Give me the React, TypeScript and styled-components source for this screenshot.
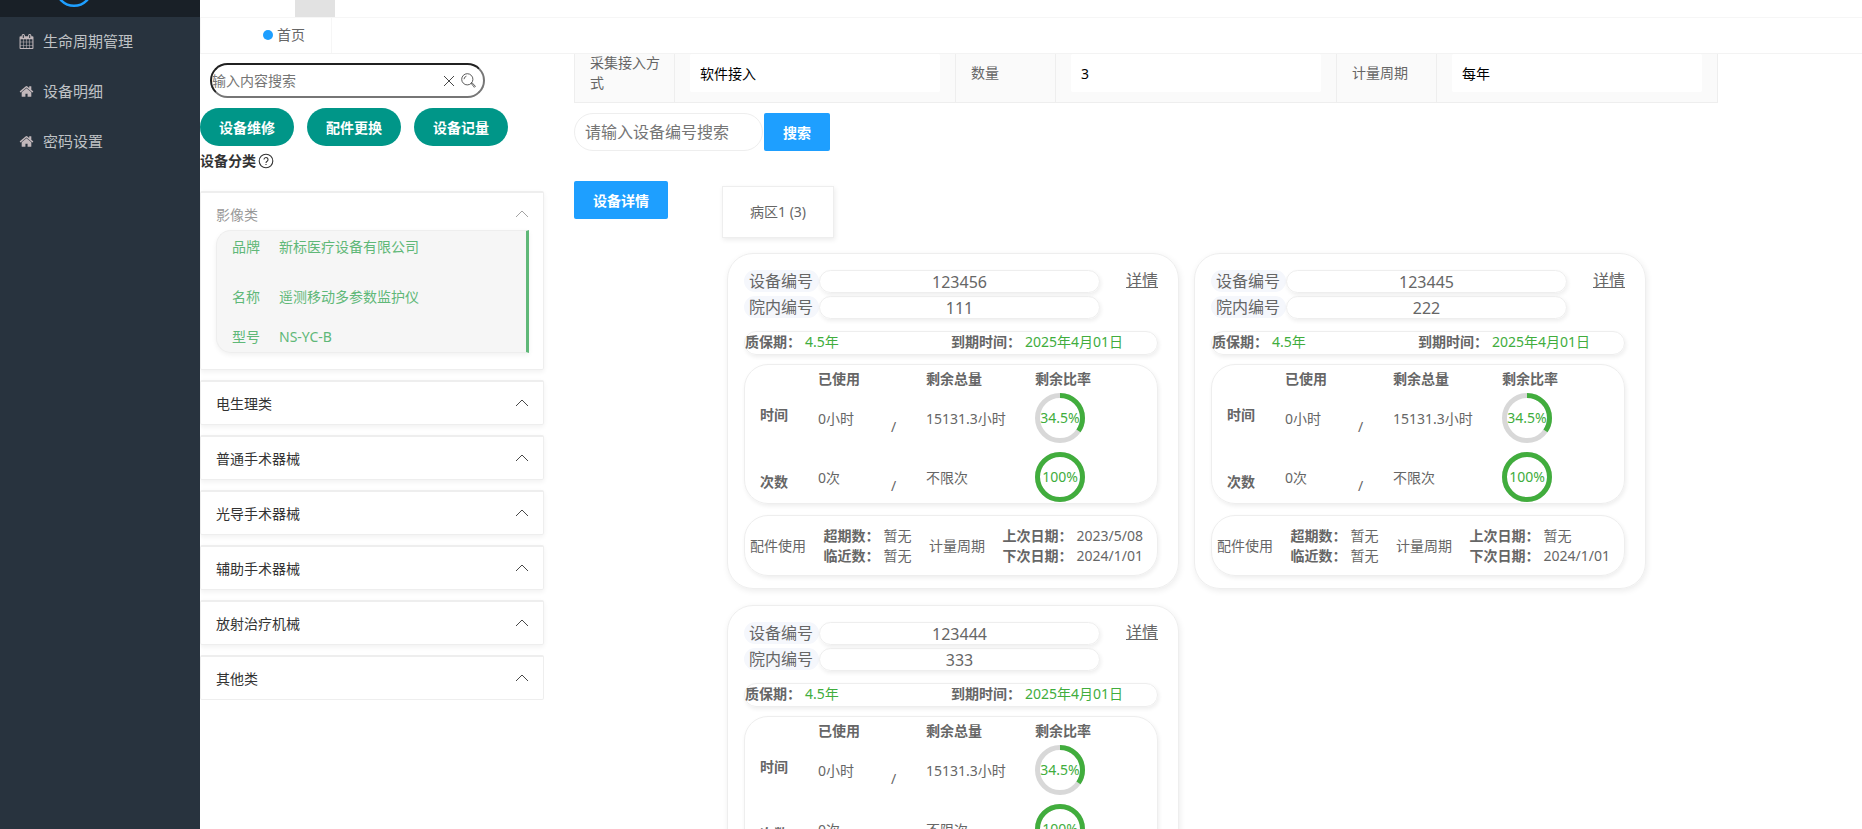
import React from "react";
import styled, { createGlobalStyle } from "styled-components";

const GlobalStyle = createGlobalStyle`
  *, *::before, *::after { box-sizing: border-box; }
  body {
    margin: 0;
    background: #fff;
    color: #666;
    font: 14px/20px "Noto Sans", "Noto Sans CJK SC", sans-serif;
  }
  button, input { font-family: inherit; }
`;

/* ---------- shell ---------- */

const Shell = styled.div`
  display: flex;
  height: 100vh;
  overflow: hidden;
`;

const Sidebar = styled.aside`
  flex: 0 0 200px;
  background: #28333e;
`;

const LogoBar = styled.div`
  display: flex;
  align-items: flex-end;
  height: 17px;
  padding: 0 0 10px 55px;
  overflow: hidden;
  background: #192027;

  svg { flex: none; display: block; }
`;

const NavLink = styled.a`
  display: flex;
  align-items: center;
  gap: 9px;
  height: 50px;
  padding: 0 0 2px 19px;
  color: #bfc2c5;
  font-size: 15px;
  text-decoration: none;

  svg { flex: none; fill: #c2b8bb; }
`;

const Page = styled.div`
  display: flex;
  flex: 1;
  flex-direction: column;
  min-width: 0;
`;

const TopBar = styled.header`
  flex: none;
  height: 18px;
  padding-left: 95px;
  border-bottom: 1px solid #f6f6f6;
`;

const TopBarItem = styled.div`
  width: 40px;
  height: 17px;
  background: #e2e2e2;
`;

const TabBar = styled.nav`
  flex: none;
  display: flex;
  height: 36px;
  border-bottom: 1px solid #f3f3f3;
`;

const PageTab = styled.a`
  display: flex;
  align-items: center;
  gap: 4px;
  width: 132px;
  padding: 0 0 2px 62px;
  border: solid #f6f6f6;
  border-width: 0 1px;
  color: #666;
  text-decoration: none;

  &::before {
    content: "";
    width: 10px;
    height: 10px;
    border-radius: 50%;
    background: #1e9fff;
  }
`;

const Body = styled.div`
  display: flex;
  flex: 1;
  gap: 30px;
  min-height: 0;
  overflow: auto;
  scrollbar-width: none;
`;

/* ---------- left column ---------- */

const Categories = styled.section`
  flex: 0 0 344px;
`;

const SearchBox = styled.form`
  display: flex;
  align-items: center;
  gap: 6px;
  width: 275px;
  height: 35px;
  margin: 9px 0 10px 10px;
  padding-right: 7px;
  border: 2px inset #767676;
  border-radius: 18px;
  overflow: hidden;
`;

const SearchInput = styled.input`
  flex: 1;
  min-width: 0;
  padding: 0;
  border: 0;
  outline: 0;
  background: none;
  font-size: 14px;

  &::placeholder { color: #757575; }
`;

const IconButton = styled.button`
  display: flex;
  padding: 0;
  border: 0;
  background: none;
  color: #333;
`;

const Button = styled.button<{ $round?: boolean }>`
  height: 38px;
  padding: 0 19px;
  border: 0;
  border-radius: ${(p) => (p.$round ? "19px" : "2px")};
  background: ${(p) => (p.$round ? "#009688" : "#1e9fff")};
  color: #fff;
  font-size: 14px;
  font-weight: 700;
  white-space: nowrap;
`;

const Actions = styled.div`
  display: flex;
  gap: 13px;
`;

const GroupTitle = styled.h2`
  display: flex;
  align-items: center;
  gap: 2px;
  height: 20px;
  margin: 5px 0 20px;
  color: #333;
  font-size: 14px;
`;

const Panel = styled.section`
  margin-bottom: 10px;
  border: 1px solid #eee;
  border-top-width: 2px;
  border-radius: 2px;
  box-shadow: 0 2px 5px rgba(0, 0, 0, 0.06);

  &:last-child { box-shadow: none; }
`;

const PanelHeader = styled.button<{ $muted?: boolean }>`
  display: flex;
  align-items: center;
  justify-content: space-between;
  width: 100%;
  height: 42px;
  padding: 0 14px 1px 15px;
  border: 0;
  background: none;
  color: ${(p) => (p.$muted ? "#999" : "#333")};
  font-size: 14px;
`;

const DeviceInfo = styled.dl`
  display: grid;
  grid-template-columns: 47px 1fr;
  grid-template-rows: 50px 50px 22px;
  height: 123px;
  margin: -5px 14px 16px 15px;
  padding-left: 15px;
  border: 1px solid #eee;
  border-right: 3px solid #5fb878;
  border-radius: 15px 0 0 15px;
  background: #f6f6f6;
  box-shadow: 0 2px 5px rgba(0, 0, 0, 0.06);
  color: #5fb878;
  line-height: 32px;

  dt, dd { margin: 0; }
  dt:nth-of-type(3), dd:nth-of-type(3) { line-height: 12px; }
`;

/* ---------- right column ---------- */

const Main = styled.main`
  flex: 1;
  min-width: 0;
  padding-right: 144px;
`;

const InfoTable = styled.table`
  width: 100%;
  height: 59px;
  margin-top: -11px;
  border-collapse: collapse;
  table-layout: fixed;
  background: #fafafa;

  th, td {
    padding: 9px 15px;
    border: 1px solid #eee;
  }
  th {
    width: 100px;
    padding-right: 10px;
    font-weight: 400;
    text-align: left;
  }
`;

const ReadField = styled.input`
  display: block;
  width: 100%;
  height: 38px;
  padding: 0 0 0 10px;
  border: 0;
  border-radius: 2px;
  background: #fff;
  color: #000;
  font-size: 14px;
`;

const DeviceSearch = styled.form`
  display: flex;
  gap: 1px;
  margin: 10px 0 30px;
`;

const DeviceInput = styled.input`
  width: 189px;
  height: 38px;
  padding: 0 0 0 10px;
  border: 1px solid #eee;
  border-radius: 19px;
  font-size: 16px;

  &::placeholder { color: #757575; }
`;

const DetailArea = styled.div`
  display: flex;
  align-items: flex-start;
  gap: 54px;
`;

const Wards = styled.div`
  flex: 1;
  min-width: 0;
  padding-top: 5px;
`;

const WardTab = styled.button`
  height: 52px;
  padding: 0 27px 2px;
  border: 1px solid #eee;
  background: #fff;
  box-shadow: 1px 2px 5px rgba(0, 0, 0, 0.08);
  color: #666;
  font-size: 14px;
`;

const CardGrid = styled.div`
  display: flex;
  flex-wrap: wrap;
  gap: 16px 15px;
  margin: 15px 0 0 5px;
`;

const Card = styled.article`
  width: 452px;
  height: 336px;
  padding: 16px 20px 12px 16px;
  border: 1px solid #eee;
  border-radius: 26px;
  box-shadow: 1px 2px 6px rgba(0, 0, 0, 0.08);
`;

const CardHead = styled.div`
  display: flex;
  align-items: flex-start;
  justify-content: space-between;
  font-size: 16px;
`;

const Numbers = styled.dl`
  display: grid;
  grid-template-columns: 75px 281px;
  row-gap: 3px;
  margin: 0;
  line-height: 22px;
  white-space: nowrap;

  dt {
    height: 22px;
    padding: 0 5px;
    border-radius: 11px;
    background: #f5f7fc;
  }
`;

const framed = `
  border: 1px solid #eee;
  box-shadow: 1px 2px 4px rgba(0, 0, 0, 0.07);
`;

const NumberValue = styled.dd`
  ${framed}
  height: 23px;
  margin: 0;
  border-radius: 12px;
  text-align: center;
`;

const DetailLink = styled.a`
  color: #666;
  line-height: 20px;
`;

const Warranty = styled.div`
  ${framed}
  display: grid;
  grid-template-columns: 1fr 1fr;
  height: 24px;
  margin: 12px 0 9px;
  border-radius: 12px;
  white-space: nowrap;

  strong { margin-right: 4px; }
  span { color: #41ad3d; }
`;

const UsageBox = styled.div`
  ${framed}
  height: 140px;
  padding-left: 15px;
  border-radius: 24px;
`;

const UsageTable = styled.table`
  width: 100%;
  border-spacing: 0;
  table-layout: fixed;

  th, td {
    padding: 0;
    text-align: left;
    white-space: nowrap;
  }
  thead tr { height: 28px; }
  tbody tr { height: 59px; }
  tbody tr:first-child td { padding-bottom: 7px; }
  tbody tr:first-child th { padding-bottom: 15px; }
  tbody tr:last-child td { padding-bottom: 7px; }
  tbody td.ring { padding: 0; vertical-align: top; }
  tbody tr td.slash { padding-top: 9px; padding-bottom: 0; }
`;

const Service = styled.div`
  ${framed}
  display: flex;
  align-items: center;
  justify-content: space-between;
  height: 61px;
  margin-top: 11px;
  padding: 0 14px 0 5px;
  border-radius: 24px;
  white-space: nowrap;

  strong { margin-right: 4px; }
`;

/* ---------- drawings ---------- */

const HomeIcon = () => (
  <svg width="15" height="15" viewBox="0 0 1792 1792" aria-hidden="true">
    <path d="M1472 992v480q0 26-19 45t-45 19h-384v-384h-256v384h-384q-26 0-45-19t-19-45v-480q0-1 .5-3t.5-3l575-474 575 474q1 2 1 6zm223-69l-62 74q-8 9-21 11h-3q-13 0-21-7l-692-577-692 577q-12 8-24 7-13-2-21-11l-62-74q-8-10-7-23.5t11-21.5l719-599q32-26 76-26t76 26l244 204v-195q0-14 9-23t23-9h192q14 0 23 9t9 23v408l219 182q10 8 11 21.5t-7 23.5z" />
  </svg>
);

const CalendarIcon = () => (
  <svg width="15" height="15" viewBox="0 0 1792 1792" aria-hidden="true">
    <path d="M192 1664h288v-288h-288v288zm352 0h320v-288h-320v288zm-352-352h288v-320h-288v320zm352 0h320v-320h-320v320zm-352-384h288v-288h-288v288zm736 736h320v-288h-320v288zm-384-736h320v-288h-320v288zm768 736h288v-288h-288v288zm-384-352h320v-320h-320v320zm-352-864v-288q0-13-9.5-22.5t-22.5-9.5h-64q-13 0-22.5 9.5t-9.5 22.5v288q0 13 9.5 22.5t22.5 9.5h64q13 0 22.5-9.5t9.5-22.5zm736 864h288v-320h-288v320zm-384-384h320v-288h-320v288zm384 0h288v-288h-288v288zm32-480v-288q0-13-9.5-22.5t-22.5-9.5h-64q-13 0-22.5 9.5t-9.5 22.5v288q0 13 9.5 22.5t22.5 9.5h64q13 0 22.5-9.5t9.5-22.5zm384-64v1280q0 52-38 90t-90 38h-1408q-52 0-90-38t-38-90v-1280q0-52 38-90t90-38h128v-96q0-66 47-113t113-47h64q66 0 113 47t47 113v96h384v-96q0-66 47-113t113-47h64q66 0 113 47t47 113v96h128q52 0 90 38t38 90z" />
  </svg>
);

const LogoRing = () => (
  <svg width="38" height="38" viewBox="0 0 38 38" aria-hidden="true">
    <circle cx="19" cy="19" r="17.8" fill="none" stroke="#1e9fff" strokeWidth="2.4" />
  </svg>
);

const ClearIcon = () => (
  <svg width="12" height="12" viewBox="0 0 12 12" fill="none" stroke="currentColor" strokeWidth="0.9" aria-hidden="true">
    <path d="M1 1l10 10M11 1L1 11" />
  </svg>
);

const SearchIcon = () => (
  <svg width="15" height="16" viewBox="0 0 15 16" fill="none" stroke="currentColor" strokeWidth="0.8" aria-hidden="true">
    <circle cx="6.3" cy="6.3" r="5.6" />
    <path d="M3 6.200a3.400 3.400 0 0 1 2.400-3M10.200 10.400l.8-.7 3.400 3.600-1 1z" />
  </svg>
);

const HelpIcon = () => (
  <svg width="16" height="16" viewBox="0 0 16 16" fill="none" stroke="#333" strokeWidth="1.1" aria-hidden="true">
    <circle cx="8" cy="8" r="6.8" />
    <path d="M6 6.600a2 2 0 1 1 3.100 1.600C8.300 8.700 8 9 8 9.900M8 10.900v1.200" />
  </svg>
);

const Chevron = () => (
  <svg width="14" height="8" viewBox="0 0 14 8" fill="none" stroke="currentColor" strokeWidth="0.9" aria-hidden="true">
    <path d="M1 7l6-6 6 6" />
  </svg>
);

const RING_LENGTH = 2 * Math.PI * 22.5;

const Ring = ({ percent }: { percent: number }) => (
  <svg width="50" height="50" viewBox="0 0 50 50" display="block" role="img">
    <circle cx="25" cy="25" r="22.5" fill="none" stroke="#d8d8d8" strokeWidth="5" />
    <circle
      cx="25"
      cy="25"
      r="22.5"
      fill="none"
      stroke="#41ad3d"
      strokeWidth="5"
      strokeDasharray={`${(RING_LENGTH * percent) / 100} ${RING_LENGTH}`}
      transform="rotate(-90 25 25)"
    />
    <text x="25" y="30" textAnchor="middle" fontSize="14" fill="#41ad3d">
      {percent}%
    </text>
  </svg>
);

/* ---------- data ---------- */

const nav = [
  { label: "生命周期管理", Icon: CalendarIcon },
  { label: "设备明细", Icon: HomeIcon },
  { label: "密码设置", Icon: HomeIcon },
];

const categories = ["电生理类", "普通手术器械", "光导手术器械", "辅助手术器械", "放射治疗机械", "其他类"];

interface Device {
  id: string;
  ward: string;
  last: string;
  next: string;
}

const devices: Device[] = [
  { id: "123456", ward: "111", last: "2023/5/08", next: "2024/1/01" },
  { id: "123445", ward: "222", last: "暂无", next: "2024/1/01" },
  { id: "123444", ward: "333", last: "暂无", next: "2024/1/01" },
];

const DeviceCard = ({ device }: { device: Device }) => (
  <Card>
    <CardHead>
      <Numbers>
        <dt>设备编号</dt>
        <NumberValue>{device.id}</NumberValue>
        <dt>院内编号</dt>
        <NumberValue>{device.ward}</NumberValue>
      </Numbers>
      <DetailLink href="#detail">详情</DetailLink>
    </CardHead>
    <Warranty>
      <div><strong>质保期：</strong><span>4.5年</span></div>
      <div><strong>到期时间：</strong><span>2025年4月01日</span></div>
    </Warranty>
    <UsageBox>
      <UsageTable>
        <colgroup>
          <col style={{ width: 58 }} />
          <col style={{ width: 73 }} />
          <col style={{ width: 35 }} />
          <col style={{ width: 109 }} />
          <col />
        </colgroup>
        <thead>
          <tr>
            <td />
            <th>已使用</th>
            <td />
            <th>剩余总量</th>
            <th>剩余比率</th>
          </tr>
        </thead>
        <tbody>
          <tr>
            <th>时间</th>
            <td>0小时</td>
            <td className="slash">/</td>
            <td>15131.3小时</td>
            <td className="ring"><Ring percent={34.5} /></td>
          </tr>
          <tr>
            <th>次数</th>
            <td>0次</td>
            <td className="slash">/</td>
            <td>不限次</td>
            <td className="ring"><Ring percent={100} /></td>
          </tr>
        </tbody>
      </UsageTable>
    </UsageBox>
    <Service>
      <span>配件使用</span>
      <div>
        <div><strong>超期数：</strong>暂无</div>
        <div><strong>临近数：</strong>暂无</div>
      </div>
      <span>计量周期</span>
      <div>
        <div><strong>上次日期：</strong>{device.last}</div>
        <div><strong>下次日期：</strong>{device.next}</div>
      </div>
    </Service>
  </Card>
);

export default function App() {
  return (
    <>
      <GlobalStyle />
      <Shell>
        <Sidebar>
          <LogoBar><LogoRing /></LogoBar>
          {nav.map(({ label, Icon }) => (
            <NavLink href="#nav" key={label}><Icon />{label}</NavLink>
          ))}
        </Sidebar>
        <Page>
          <TopBar><TopBarItem /></TopBar>
          <TabBar><PageTab href="#home">首页</PageTab></TabBar>
          <Body>
            <Categories>
              <SearchBox>
                <SearchInput placeholder="输入内容搜索" aria-label="输入内容搜索" />
                <IconButton type="button" aria-label="清除"><ClearIcon /></IconButton>
                <IconButton type="button" aria-label="搜索"><SearchIcon /></IconButton>
              </SearchBox>
              <Actions>
                <Button $round>设备维修</Button>
                <Button $round>配件更换</Button>
                <Button $round>设备记量</Button>
              </Actions>
              <GroupTitle>设备分类<HelpIcon /></GroupTitle>
              <div>
                <Panel>
                  <PanelHeader $muted>影像类<Chevron /></PanelHeader>
                  <DeviceInfo>
                    <dt>品牌</dt><dd>新标医疗设备有限公司</dd>
                    <dt>名称</dt><dd>遥测移动多参数监护仪</dd>
                    <dt>型号</dt><dd>NS-YC-B</dd>
                  </DeviceInfo>
                </Panel>
                {categories.map((name) => (
                  <Panel key={name}>
                    <PanelHeader>{name}<Chevron /></PanelHeader>
                  </Panel>
                ))}
              </div>
            </Categories>
            <Main>
              <InfoTable>
                <tbody>
                  <tr>
                    <th><label htmlFor="access">采集接入方式</label></th>
                    <td><ReadField id="access" defaultValue="软件接入" /></td>
                    <th><label htmlFor="count">数量</label></th>
                    <td><ReadField id="count" defaultValue="3" /></td>
                    <th><label htmlFor="cycle">计量周期</label></th>
                    <td><ReadField id="cycle" defaultValue="每年" /></td>
                  </tr>
                </tbody>
              </InfoTable>
              <DeviceSearch>
                <DeviceInput placeholder="请输入设备编号搜索" aria-label="请输入设备编号搜索" />
                <Button type="button">搜索</Button>
              </DeviceSearch>
              <DetailArea>
                <Button>设备详情</Button>
                <Wards>
                  <WardTab>病区1 (3)</WardTab>
                  <CardGrid>
                    {devices.map((device) => (
                      <DeviceCard device={device} key={device.id} />
                    ))}
                  </CardGrid>
                </Wards>
              </DetailArea>
            </Main>
          </Body>
        </Page>
      </Shell>
    </>
  );
}
